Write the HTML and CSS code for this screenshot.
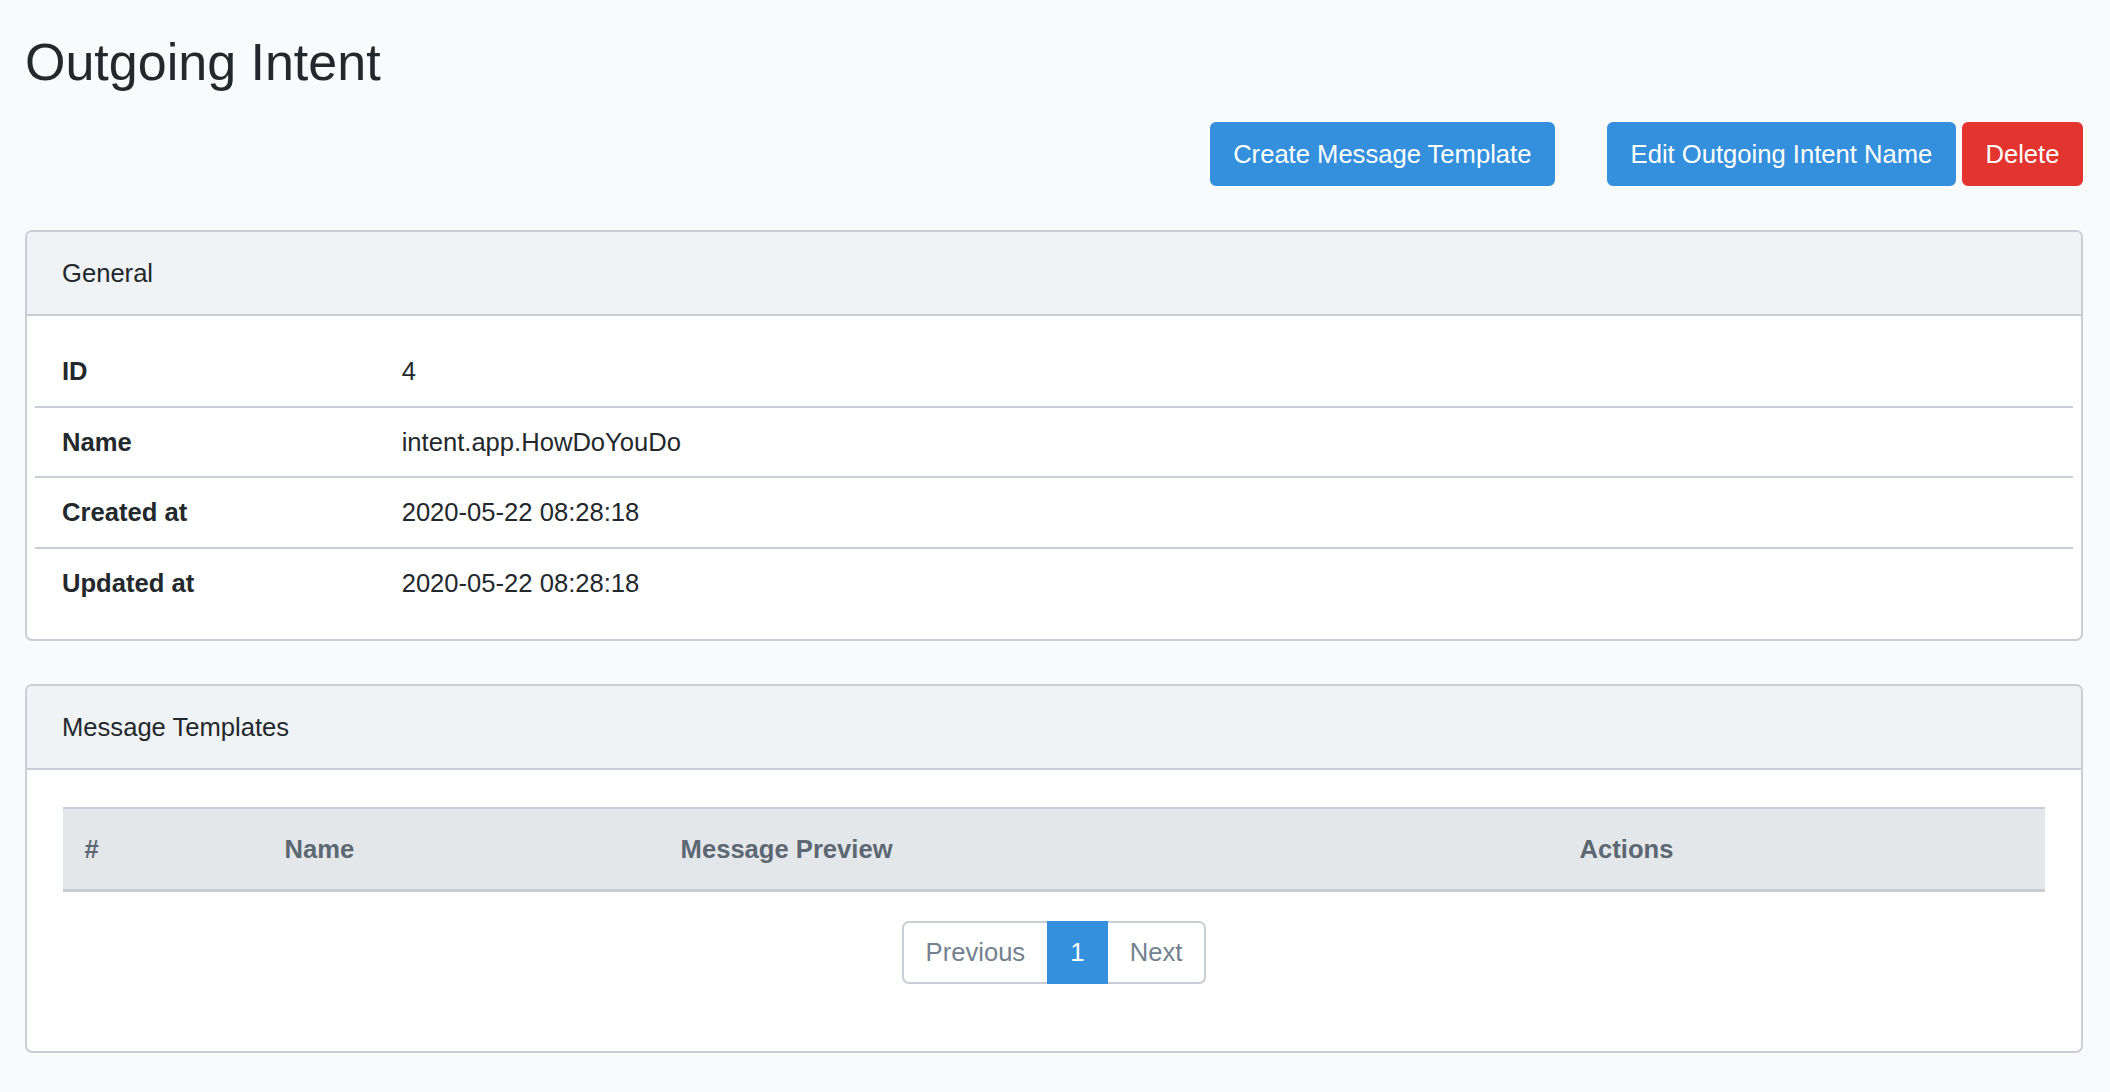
FILE: index.html
```html
<!DOCTYPE html>
<html lang="en">
<head>
<meta charset="utf-8">
<title>Outgoing Intent</title>
<link rel="stylesheet" href="styles.css">
</head>
<body>
<main class="page">
  <h1 class="page-title">Outgoing Intent</h1>

  <div class="actions">
    <a class="btn btn-primary" href="#">Create Message Template</a>
    <div class="btn-group">
      <a class="btn btn-primary" href="#">Edit Outgoing Intent Name</a>
      <a class="btn btn-danger" href="#">Delete</a>
    </div>
  </div>

  <section class="card card-general">
    <div class="card-header">General</div>
    <div class="card-body general-body">
      <div class="dl-row">
        <div class="dl-term">ID</div>
        <div class="dl-desc">4</div>
      </div>
      <div class="dl-row">
        <div class="dl-term">Name</div>
        <div class="dl-desc">intent.app.HowDoYouDo</div>
      </div>
      <div class="dl-row">
        <div class="dl-term">Created at</div>
        <div class="dl-desc">2020-05-22 08:28:18</div>
      </div>
      <div class="dl-row">
        <div class="dl-term">Updated at</div>
        <div class="dl-desc">2020-05-22 08:28:18</div>
      </div>
    </div>
  </section>

  <section class="card">
    <div class="card-header">Message Templates</div>
    <div class="card-body templates-body">
      <table class="table">
        <colgroup>
          <col class="col-num">
          <col class="col-name">
          <col class="col-preview">
          <col class="col-actions">
        </colgroup>
        <thead>
          <tr>
            <th>#</th>
            <th>Name</th>
            <th>Message Preview</th>
            <th>Actions</th>
          </tr>
        </thead>
        <tbody></tbody>
      </table>
      <ul class="pagination">
        <li class="page-item"><a class="page-link" href="#">Previous</a></li>
        <li class="page-item active"><a class="page-link" href="#">1</a></li>
        <li class="page-item"><a class="page-link" href="#">Next</a></li>
      </ul>
    </div>
  </section>
</main>
</body>
</html>
```

FILE: styles.css
```css
html, body {
  margin: 0;
  padding: 0;
}

body {
  background: #f8fafc;
  color: #23282c;
  font-family: "Liberation Sans", Arial, Helvetica, sans-serif;
  font-size: 25.6px;
  line-height: 38.4px;
}

.page {
  padding: 31px 27px 40px 25px;
}

.page-title {
  margin: 0;
  font-size: 52px;
  line-height: 62px;
  font-weight: 400;
  color: #23282c;
}

.actions {
  display: flex;
  justify-content: flex-end;
  align-items: center;
  gap: 52px;
  margin-top: 29px;
  margin-bottom: 44px;
}

.btn-group {
  display: flex;
  gap: 6px;
}

.btn {
  display: inline-block;
  padding: 10.8px 21.6px;
  border: 2px solid transparent;
  border-radius: 6px;
  font-size: 25.6px;
  line-height: 38.4px;
  color: #ffffff;
  text-decoration: none;
  white-space: nowrap;
}

.btn-primary {
  background: #3490dc;
  border-color: #3490dc;
}

.btn-danger {
  background: #e3342f;
  border-color: #e3342f;
}

.card {
  background: #ffffff;
  border: 2px solid #c8ced3;
  border-radius: 7px;
  overflow: hidden;
}

.card-general {
  margin-bottom: 43px;
}

.card-header {
  background: #f0f3f5;
  border-bottom: 2px solid #c8ced3;
  padding: 22px 35px;
  line-height: 38.4px;
}

.general-body {
  padding: 21px 36px 22px;
}

.dl-row {
  display: grid;
  grid-template-columns: 1fr 5fr;
  margin: 0 -28px;
  border-bottom: 2px solid #c8ced3;
}

.dl-row:last-child {
  border-bottom: 0;
}

.dl-term,
.dl-desc {
  padding: 15px 27px;
}

.dl-term {
  font-weight: 700;
}

.templates-body {
  padding: 37px 36px 36px;
}

.table {
  width: 100%;
  border-collapse: separate;
  border-spacing: 0;
  table-layout: fixed;
  margin-bottom: 29px;
}

.col-num { width: 200px; }
.col-name { width: 396px; }
.col-preview { width: 899px; }
.col-actions { width: auto; }

.table th {
  background: #e4e7ea;
  color: #5c6873;
  font-weight: 700;
  text-align: left;
  padding: 20.5px 21.6px;
  border-top: 2px solid #c8ced3;
  border-bottom: 3px solid #c8ced3;
  line-height: 38.4px;
}

.pagination {
  display: flex;
  justify-content: center;
  list-style: none;
  margin: 0 0 31px;
  padding: 0;
}

.page-item + .page-item {
  margin-left: -2px;
}

.page-link {
  display: block;
  padding: 14px 21.6px;
  line-height: 31px;
  border: 2px solid #c8ced3;
  background: #ffffff;
  color: #73818f;
  text-decoration: none;
  position: relative;
}

.page-item:first-child .page-link {
  border-radius: 7px 0 0 7px;
}

.page-item:last-child .page-link {
  border-radius: 0 7px 7px 0;
}

.page-item.active .page-link {
  background: #3490dc;
  border-color: #3490dc;
  color: #ffffff;
  z-index: 1;
}
```
